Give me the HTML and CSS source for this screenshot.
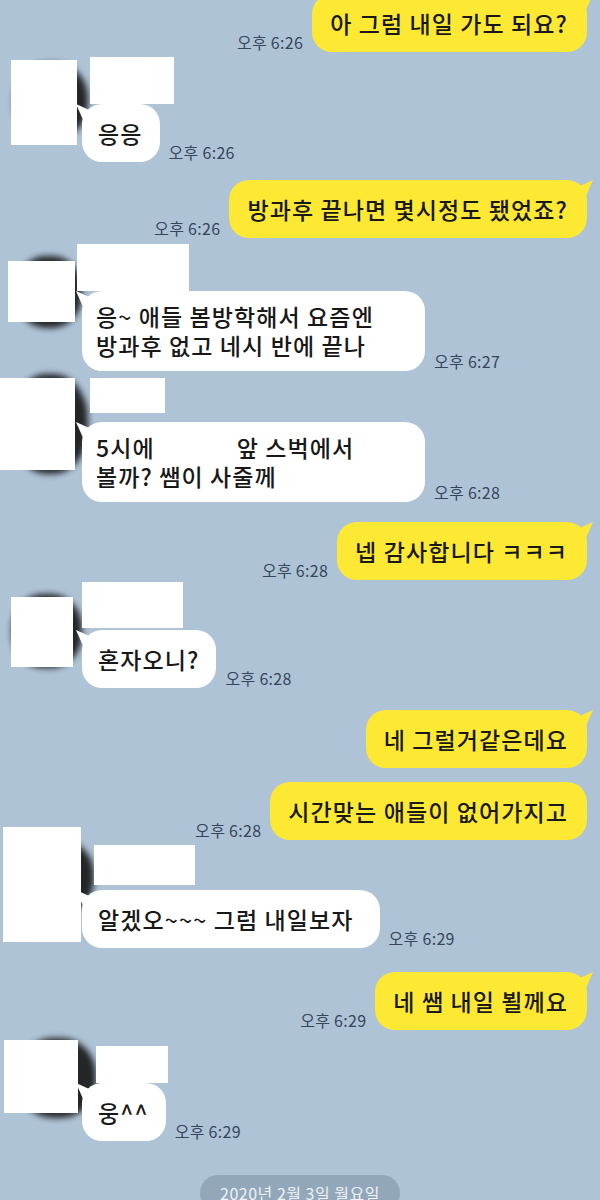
FILE: index.html
```html
<!DOCTYPE html>
<html>
<head>
    <title>Chat</title>
    <link rel="stylesheet" href="styles.css">
</head>
<body>
    <div class="chat">
        <div class="row mine first">
            <span class="time">오후 6:26</span>
            <div class="bubble me tail">아 그럼 내일 가도 되요?</div>
        </div>

        <div class="group g1">
            <div class="smudge"></div>
            <div class="avatar-col"><div class="avatar"></div></div>
            <div class="msg-col">
                <div class="name"></div>
                <div class="row">
                    <div class="bubble you tail">응응</div>
                    <span class="time">오후 6:26</span>
                </div>
            </div>
        </div>

        <div class="row mine r-b">
            <span class="time">오후 6:26</span>
            <div class="bubble me tail">방과후 끝나면 몇시정도 됐었죠?</div>
        </div>

        <div class="group g2">
            <div class="smudge"></div>
            <div class="avatar-col"><div class="avatar"></div></div>
            <div class="msg-col">
                <div class="name"></div>
                <div class="row">
                    <div class="bubble you tail multi">응~ 애들 봄방학해서 요즘엔<br>방과후 없고 네시 반에 끝나</div>
                    <span class="time">오후 6:27</span>
                </div>
            </div>
        </div>

        <div class="group g3">
            <div class="smudge"></div>
            <div class="avatar-col"><div class="avatar"></div></div>
            <div class="msg-col">
                <div class="name"></div>
                <div class="row">
                    <div class="bubble you tail multi">5시에<span class="redact"></span>앞 스벅에서<br>볼까? 쌤이 사줄께</div>
                    <span class="time">오후 6:28</span>
                </div>
            </div>
        </div>

        <div class="row mine r-c">
            <span class="time">오후 6:28</span>
            <div class="bubble me tail">넵 감사합니다 ㅋㅋㅋ</div>
        </div>

        <div class="group g4">
            <div class="smudge"></div>
            <div class="avatar-col"><div class="avatar"></div></div>
            <div class="msg-col">
                <div class="name"></div>
                <div class="row">
                    <div class="bubble you tail">혼자오니?</div>
                    <span class="time">오후 6:28</span>
                </div>
            </div>
        </div>

        <div class="row mine r-d">
            <div class="bubble me tail">네 그럴거같은데요</div>
        </div>
        <div class="row mine r-e">
            <span class="time">오후 6:28</span>
            <div class="bubble me">시간맞는 애들이 없어가지고</div>
        </div>

        <div class="group g5">
            <div class="smudge"></div>
            <div class="avatar-col"><div class="avatar"></div></div>
            <div class="msg-col">
                <div class="name"></div>
                <div class="row">
                    <div class="bubble you tail wide">알겠오~~~ 그럼 내일보자</div>
                    <span class="time">오후 6:29</span>
                </div>
            </div>
        </div>

        <div class="row mine r-f">
            <span class="time">오후 6:29</span>
            <div class="bubble me tail">네 쌤 내일 뵐께요</div>
        </div>

        <div class="group g6">
            <div class="smudge"></div>
            <div class="avatar-col"><div class="avatar"></div></div>
            <div class="msg-col">
                <div class="name"></div>
                <div class="row">
                    <div class="bubble you tail">웅^^</div>
                    <span class="time">오후 6:29</span>
                </div>
            </div>
        </div>

        <div class="date-line">
            <span class="date-pill">2020년 2월 3일 월요일</span>
        </div>
    </div>
</body>
</html>
```

FILE: styles.css
```css
body {
    margin: 0;
    padding: 0;
    background-color: #afc3d7;
    font-family: "Noto Sans CJK KR", "Noto Sans", sans-serif;
    width: 600px;
    height: 1200px;
    overflow: hidden;
}
.chat {
    display: flex;
    flex-direction: column;
}
.row {
    display: flex;
    align-items: flex-end;
    gap: 9px;
}
.row.mine {
    justify-content: flex-end;
    padding-right: 13px;
}
.first { margin-top: -6px; }
.r-b { margin-top: 18px; }
.r-c { margin-top: 20px; }
.r-d { margin-top: 22px; }
.r-e { margin-top: 14px; }
.r-f { margin-top: 24px; }

.time {
    font-size: 16px;
    line-height: 18px;
    letter-spacing: 0.3px;
    color: #35465a;
    white-space: nowrap;
    margin-bottom: 1px;
}

.bubble {
    position: relative;
    font-size: 23px;
    font-weight: 500;
    letter-spacing: 1.1px;
    line-height: 28px;
    color: #181818;
    padding: 15px 19px 15px 18px;
    border-radius: 20px;
    white-space: nowrap;
}
.bubble.me {
    background-color: #fde834;
}
.bubble.you {
    background-color: #fff;
    padding: 15px 17px 15px 16px;
}
.bubble.you.wide {
    padding-right: 26px;
}
.bubble.multi {
    width: 343px;
    box-sizing: border-box;
    line-height: 29px;
    padding: 11px 12px 11px 14px;
}
.bubble.me.tail::after {
    content: "";
    position: absolute;
    right: -6px;
    top: 0;
    width: 16px;
    height: 18px;
    background-color: #fde834;
    clip-path: polygon(0 40%, 100% 0, 50% 100%);
}
.bubble.you.tail::after {
    content: "";
    position: absolute;
    left: -6px;
    top: 0;
    width: 16px;
    height: 18px;
    background-color: #fff;
    clip-path: polygon(100% 40%, 0 0, 50% 100%);
}
.redact {
    display: inline-block;
    width: 82px;
    height: 26px;
    vertical-align: -4px;
    background-color: #fff;
}

/* censored profile blocks */
.group {
    position: relative;
    display: flex;
    align-items: flex-start;
}
.avatar-col {
    width: 82px;
    flex-shrink: 0;
}
.avatar, .name {
    background-color: #fff;
}
.msg-col {
    display: flex;
    flex-direction: column;
    align-items: flex-start;
}
.smudge {
    position: absolute;
    z-index: -1;
    background-color: #151515;
    border-radius: 45%;
    filter: blur(3px);
    opacity: 0.9;
}

.g1 { margin-top: 5px; }
.g1 .avatar { margin: 3px 0 0 11px; width: 66px; height: 85px; }
.g1 .name { margin-left: 8px; width: 84px; height: 47px; }
.g1 .smudge { left: 14px; top: 6px; width: 74px; height: 76px; }

.g2 { margin-top: 6px; }
.g2 .avatar { margin: 17px 0 0 8px; width: 67px; height: 61px; }
.g2 .name { margin-left: -5px; width: 112px; height: 47px; }
.g2 .smudge { left: 16px; top: 12px; width: 66px; height: 72px; }

.g3 { margin-top: 7px; }
.g3 .avatar { margin: 0; width: 75px; height: 92px; }
.g3 .name { margin: 0 0 9px 8px; width: 75px; height: 35px; }
.g3 .smudge { left: 12px; top: -4px; width: 76px; height: 100px; }

.g4 { margin-top: 2px; }
.g4 .avatar { margin: 15px 0 0 11px; width: 62px; height: 70px; }
.g4 .name { margin: 0 0 2px 0; width: 101px; height: 46px; }
.g4 .smudge { left: 12px; top: 12px; width: 70px; height: 74px; }

.g5 { margin-top: 5px; }
.g5 .avatar { margin: -18px 0 0 3px; width: 78px; height: 115px; }
.g5 .name { margin: 0 0 5px 12px; width: 101px; height: 40px; }
.g5 .smudge { left: 14px; top: -6px; width: 80px; height: 76px; }

.g6 { margin-top: 16px; }
.g6 .avatar { margin: -6px 0 0 4px; width: 74px; height: 73px; }
.g6 .name { margin-left: 14px; width: 72px; height: 37px; }
.g6 .smudge { left: 18px; top: -8px; width: 78px; height: 80px; }

.date-line {
    margin-top: 34px;
    display: flex;
    justify-content: center;
}
.date-pill {
    background-color: #93a7bb;
    color: #eef2f6;
    font-size: 16px;
    letter-spacing: 0.5px;
    line-height: 36px;
    padding: 0 20px;
    border-radius: 18px;
}
```
